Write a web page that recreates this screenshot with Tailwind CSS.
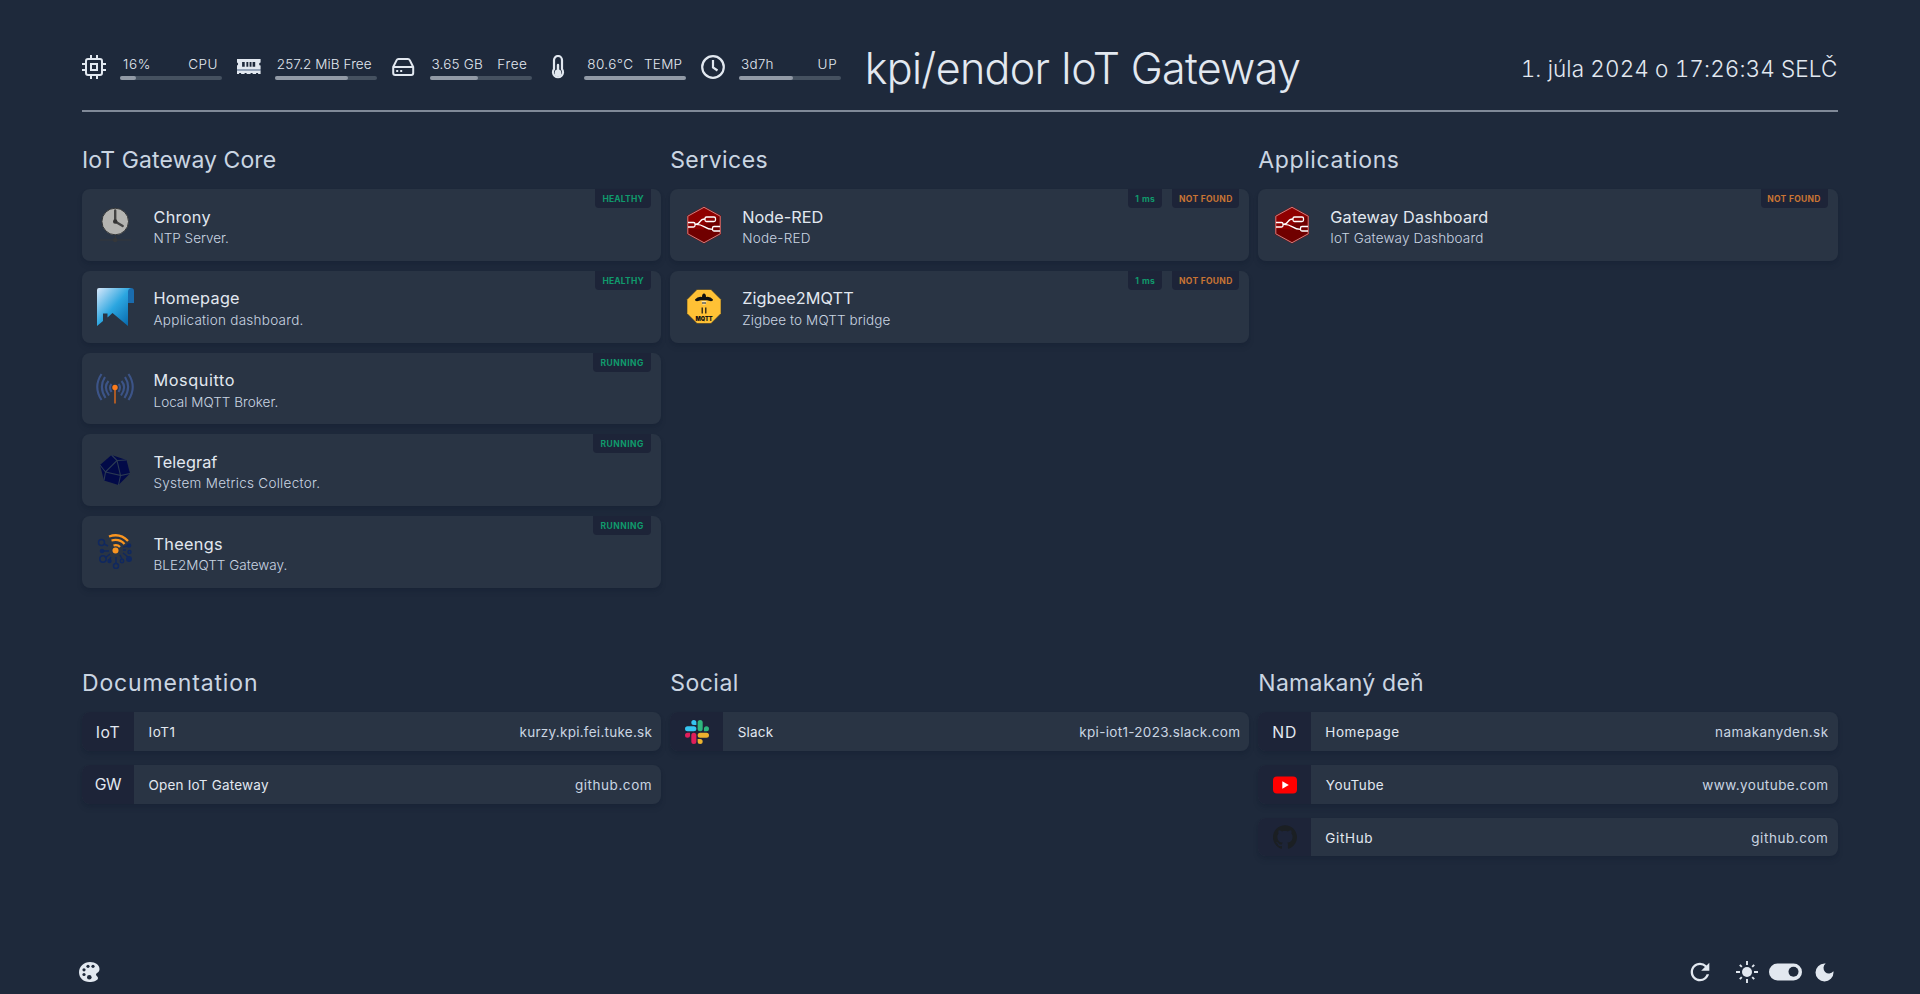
<!DOCTYPE html>
<html lang="sk">
<head>
<meta charset="utf-8">
<title>kpi/endor IoT Gateway</title>
<script src="https://cdn.jsdelivr.net/npm/@tailwindcss/browser@4"></script>
</head>
<body class="flex h-[994px] w-[1920px] flex-col overflow-hidden bg-[#1e293b] pr-[82.5px] pl-[82px] font-['Inter',sans-serif] whitespace-nowrap text-slate-200">

<svg class="hidden">
  <symbol id="nodered" viewBox="0 0 36 38">
    <path d="M18 .5 35 9.800v18.400L18 37.500 1 28.200V9.800z" fill="#8f0000"/>
    <path d="M18 19 34 10v18L18 37z" fill="#700000"/><path d="M2 23 34 24v4L18 37 2 28z" fill="#700000"/>
    <path d="M18 1.300 34.200 10.200v17.600L18 36.700 1.800 27.800V10.200z" fill="none" stroke="#c98080" stroke-width="1"/>
    <g fill="none" stroke="#fff" stroke-width="1.300"><path d="M2 16.500h5.500q1.500 0 1.500 1.500v1.500q0 1.500-1.500 1.500H2M9 18.300c7 0 3-5.300 10-5.300M10 18.300c9 0 8 5 16.500 5"/><rect x="19" y="11" width="10.500" height="4.500" rx="1.500"/><path d="M34 20.500h-6q-1.500 0-1.500 1.500v1.500q0 1.500 1.500 1.500h6"/></g>
  </symbol>
</svg>

<header class="flex h-[112px] shrink-0 items-start border-b-2 border-[#808998]">
  <div class="flex pt-[55px]">
    <div class="flex w-[154.75px] gap-[14px]">
      <svg class="size-6" viewBox="0 0 24 24" fill="none" stroke="currentColor" stroke-width="2" stroke-linecap="butt"><rect x="4" y="4" width="16" height="16" rx="2"/><rect x="9" y="9" width="6" height="6"/><path d="M9 0v4M15 0v4M9 20v4M15 20v4M20 9h4M20 15h4M0 9h4M0 15h4"/></svg>
      <div class="w-[102px]"><div class="flex h-[21px] justify-between pr-1 pl-[3px] text-[13.5px] leading-[18px] font-light"><span class="tracking-[0.7px]">16%</span><span class="tracking-[0.5px]">CPU</span></div><div class="h-1 rounded-full bg-[#455160]"><div class="h-1 rounded-full bg-[#929aa6]" style="width:16%"></div></div></div>
    </div>
    <div class="flex w-[154.75px] gap-[14px]">
      <svg class="size-6" viewBox="1 0 24 24"><path fill="currentColor" d="M0 4h24v3.500a1.500 1.500 0 0 0 0 3V14H0v-3.500a1.500 1.500 0 0 0 0-3zM0 15.800h24V19h-2.500v-1h-2v1h-3.500v-1h-2v1h-4v-1H8v1H4.500v-1h-2v1H0z" transform="translate(.6 0)"/><path fill="#94a3b8" d="M.6 14h24v2H.6z"/><path fill="#1e293b" d="M6.100 7h2.600v4.800H6.100zM10.400 7h1.900v4.800h-1.900zM13.600 7h1.900v4.800h-1.900zM16.600 7h2.600v4.800h-2.600z"/></svg>
      <div class="w-[102px]"><div class="flex h-[21px] justify-between pr-1 pl-[2px] text-[13.5px] leading-[18px] font-light"><span class="tracking-[0.09px]">257.2 MiB Free</span></div><div class="h-1 rounded-full bg-[#455160]"><div class="h-1 rounded-full bg-[#929aa6]" style="width:72%"></div></div></div>
    </div>
    <div class="flex w-[154.75px] gap-[14px]">
      <svg class="size-6" viewBox="0.8 0 24 24" fill="none" stroke="currentColor" stroke-width="2" stroke-linejoin="round"><path d="M22 12H2M5.450 5.110 2 12v6a2 2 0 0 0 2 2h16a2 2 0 0 0 2-2v-6l-3.450-6.890A2 2 0 0 0 16.760 4H7.240a2 2 0 0 0-1.790 1.110zM5 16h2M9 16h2"/></svg>
      <div class="w-[102px]"><div class="flex h-[21px] justify-between pr-1 pl-[2px] text-[13.5px] leading-[18px] font-light"><span class="tracking-[0.18px]">3.65 GB</span><span class="tracking-[0.6px]">Free</span></div><div class="h-1 rounded-full bg-[#455160]"><div class="h-1 rounded-full bg-[#929aa6]" style="width:48%"></div></div></div>
    </div>
    <div class="flex w-[154.75px] gap-[14px]">
      <svg class="size-6" viewBox="0 0 24 24" fill="none" stroke="currentColor"><path stroke-width="2.200" d="M8 5a4 4 0 0 1 8 0v9.200a5 5 0 1 1-8 0z"/><circle cx="12" cy="18" r="3.400" fill="currentColor" stroke="none"/><path stroke-width="2.400" stroke-linecap="round" d="M12 10V18"/></svg>
      <div class="w-[102px]"><div class="flex h-[21px] justify-between pr-1 pl-[3px] text-[13.5px] leading-[18px] font-light"><span class="tracking-[0.43px]">80.6°C</span><span class="tracking-[0.24px]">TEMP</span></div><div class="h-1 rounded-full bg-[#929aa6]"></div></div>
    </div>
    <div class="flex w-[154.75px] gap-[14px]">
      <svg class="size-6" viewBox="0 0 24 24" fill="none" stroke="currentColor" stroke-width="2.200"><circle cx="12" cy="12" r="10.800"/><path d="M12 5v7.500l4.500 3"/></svg>
      <div class="w-[102px]"><div class="flex h-[21px] justify-between pr-[3.5px] pl-[2px] text-[13.5px] leading-[18px] font-light"><span class="tracking-[0.21px]">3d7h</span><span class="tracking-[0.8px]">UP</span></div><div class="h-1 rounded-full bg-[#455160]"><div class="h-1 rounded-full bg-[#929aa6]" style="width:53%"></div></div></div>
    </div>
  </div>
  <h1 class="mt-[44px] ml-[9px] text-[43px] leading-[48px] font-[350] tracking-[-0.68px]">kpi/endor IoT Gateway</h1>
  <div class="mt-[53px] ml-auto text-[22.5px] leading-8 font-light tracking-[0.1px] tabular-nums">1. júla 2024 o 17:26:34 SELČ</div>
</header>

<main class="grid h-[554.5px] shrink-0 grid-cols-3 content-start items-start gap-x-[9px] pt-[31.5px]">
  <section>
    <h2 class="mb-[13.5px] text-[23px] leading-8 tracking-[0.08px] text-slate-300">IoT Gateway Core</h2>
    <div class="flex flex-col gap-[10px]">
      <div class="relative flex h-[71.75px] rounded-lg bg-[#293444] shadow-md shadow-slate-900/20">
        <svg class="mt-[17px] ml-[15px] size-9" viewBox="0 0 36 36"><path d="M3 34h31M18.500 30v4" stroke="#35373a" stroke-width="1.200"/><circle cx="18.200" cy="34" r="2.200" fill="#35373a"/><circle cx="18.200" cy="15.500" r="13.300" fill="#b4b4b1" stroke="#343638" stroke-width="1"/><path d="M18.200 4.500v11l7.500 4.500" fill="none" stroke="#444" stroke-width="2.400" stroke-linecap="round"/><circle cx="18.200" cy="15.500" r="2.200" fill="#333"/></svg>
        <div class="mt-[16.5px] ml-[20.5px]"><div class="text-[16.25px] leading-[22px] tracking-[0.3px]">Chrony</div><div class="mt-[1.5px] text-[13.5px] leading-[18px] font-light text-slate-300">NTP Server.</div></div>
        <div class="absolute top-0 right-[10px] flex h-[19px] text-[8.5px] leading-5 font-bold"><span class="w-14 rounded-b bg-[#1d2438] text-center tracking-[0.18px] text-[#109a6c]">HEALTHY</span></div>
      </div>
      <div class="relative flex h-[71.75px] rounded-lg bg-[#293444] shadow-md shadow-slate-900/20">
        <svg class="mt-[17px] ml-[15px] h-[38px] w-[37px]" viewBox="0 0 37 38"><defs><linearGradient id="hp" x1="0" y1="0" x2="1" y2="1"><stop offset="0" stop-color="#d8e8fb"/><stop offset=".5" stop-color="#2ba6e0"/><stop offset="1" stop-color="#0463a8"/></linearGradient></defs><path d="M31 0h3q3 0 3 3v12h-6z" fill="#1a6cae"/><path d="M2 0h32q-3 .5-3 4v34L15.500 25l-5 4.500v-4H6V33l-6 5V2q0-2 2-2z" fill="url(#hp)"/></svg>
        <div class="mt-[16.5px] ml-[19.500px]"><div class="text-[16.25px] leading-[22px] tracking-[0.27px]">Homepage</div><div class="mt-[1.5px] text-[13.5px] leading-[18px] font-light tracking-[0.26px] text-slate-300">Application dashboard.</div></div>
        <div class="absolute top-0 right-[10px] flex h-[19px] text-[8.5px] leading-5 font-bold"><span class="w-14 rounded-b bg-[#1d2438] text-center tracking-[0.18px] text-[#109a6c]">HEALTHY</span></div>
      </div>
      <div class="relative flex h-[71.75px] rounded-lg bg-[#293444] shadow-md shadow-slate-900/20">
        <svg class="mt-[17px] ml-[14px] h-9 w-[38px]" viewBox="0 0 38 36"><g fill="none" stroke="#3c5488" stroke-width="2.100"><path d="M5.500 4Q-3 17 5.500 30M9 7Q2.500 17 9.500 28M12.500 11Q7 17 13 25.500M15.500 14Q12.500 17 15.500 22M32.500 4Q41 17 32.500 30M29 7Q35.500 17 28.500 28M25.500 11Q31 17 25 25.500M22.500 14Q25.500 17 22.500 22"/></g><path d="M19 19v14.500" stroke="#b85f24" stroke-width="1.800"/><circle cx="19" cy="17.500" r="2.700" fill="#fd7b1c"/></svg>
        <div class="mt-[16.5px] ml-[19.500px]"><div class="text-[16.25px] leading-[22px] tracking-[0.58px]">Mosquitto</div><div class="mt-[1.5px] text-[13.5px] leading-[18px] font-light tracking-[0.02px] text-slate-300">Local MQTT Broker.</div></div>
        <div class="absolute top-0 right-[10px] flex h-[19px] text-[8.5px] leading-5 font-bold"><span class="w-[58px] rounded-b bg-[#1d2438] text-center tracking-[0.5px] text-[#109a6c]">RUNNING</span></div>
      </div>
      <div class="relative flex h-[71.75px] rounded-lg bg-[#293444] shadow-md shadow-slate-900/20">
        <svg class="mt-[18px] ml-[15px] size-9" viewBox="0 0 36 36"><path d="M14.500 3 29.500 8 33 21.500 21.500 33 7 28.500 3 13z" fill="#020a48"/><path d="M14.500 3 20 8.500 29.500 8M20 8.500 8.500 20 3 13M20 8.500l3.500 15 9.500-2M8.500 20l15 3.500-2 9.500M8.500 20 7 28.500" fill="none" stroke="#2c3b52" stroke-width="1.100"/></svg>
        <div class="mt-[16.5px] ml-[20.500px]"><div class="text-[16.25px] leading-[22px] tracking-[0.08px]">Telegraf</div><div class="mt-[1.5px] text-[13.5px] leading-[18px] font-light tracking-[0.27px] text-slate-300">System Metrics Collector.</div></div>
        <div class="absolute top-0 right-[10px] flex h-[19px] text-[8.5px] leading-5 font-bold"><span class="w-[58px] rounded-b bg-[#1d2438] text-center tracking-[0.5px] text-[#109a6c]">RUNNING</span></div>
      </div>
      <div class="relative flex h-[71.75px] rounded-lg bg-[#293444] shadow-md shadow-slate-900/20">
        <svg class="mt-[17px] ml-[15px] size-9" viewBox="0 0 36 36"><g fill="none" stroke="#10285f" stroke-width="1.500"><circle cx="4.500" cy="9.500" r="3"/><path d="M7 11l4 2M5 18h7M8 25l5-4M14 24l-2 4M19 24v6M23 22l2 4M26 20l5 4M26 17h3M26 14l5-1"/><circle cx="6" cy="26" r="3.200"/><circle cx="19" cy="33" r="2.500"/><circle cx="25" cy="28" r="1.700"/><circle cx="32.500" cy="19" r="1.500"/></g><g fill="#10285f"><circle cx="5" cy="18" r="2.300"/><circle cx="12.500" cy="28" r="2.200"/><circle cx="32" cy="26" r="3"/><circle cx="32" cy="12.500" r="2.300"/></g><circle cx="18.500" cy="17.500" r="3" fill="#fa9520"/><g fill="none" stroke="#fa9520" stroke-width="2.300"><path d="M16.500 12.500q4-1.200 6.500 1.500M14.500 7.500q8-2 13 3.500M12 3.500Q23-.5 31 8"/></g></svg>
        <div class="mt-[16.5px] ml-[20.500px]"><div class="text-[16.25px] leading-[22px] tracking-[0.3px]">Theengs</div><div class="mt-[1.5px] text-[13.5px] leading-[18px] font-light tracking-[0.02px] text-slate-300">BLE2MQTT Gateway.</div></div>
        <div class="absolute top-0 right-[10px] flex h-[19px] text-[8.5px] leading-5 font-bold"><span class="w-[58px] rounded-b bg-[#1d2438] text-center tracking-[0.5px] text-[#109a6c]">RUNNING</span></div>
      </div>
    </div>
  </section>

  <section>
    <h2 class="mb-[13.5px] text-[23px] leading-8 tracking-[0.45px] text-slate-300">Services</h2>
    <div class="flex flex-col gap-[10px]">
      <div class="relative flex h-[71.75px] rounded-lg bg-[#293444] shadow-md shadow-slate-900/20">
        <svg class="mt-[17px] ml-4 h-[38px] w-9"><use href="#nodered"/></svg>
        <div class="mt-[16.5px] ml-5"><div class="text-[16.25px] leading-[22px] tracking-[0.03px]">Node-RED</div><div class="mt-[1.5px] text-[13.5px] leading-[18px] font-light tracking-[0.24px] text-slate-300">Node-RED</div></div>
        <div class="absolute top-0 right-[10px] flex h-[19px] gap-[10px] text-[8.5px] leading-5 font-bold"><span class="w-[34px] rounded-b bg-[#1d2438] text-center tracking-[0.43px] text-[#109a6c]">1 ms</span><span class="w-[67px] rounded-b bg-[#1d2438] text-center tracking-[0.3px] text-[#c97434]">NOT FOUND</span></div>
      </div>
      <div class="relative flex h-[71.75px] rounded-lg bg-[#293444] shadow-md shadow-slate-900/20">
        <svg class="mt-[18px] ml-4 size-9" viewBox="0 0 36 36"><path d="M11 .5h14l10 10v14l-10 10H11l-10-10v-14z" fill="#ffc135" stroke="#3a3526" stroke-width=".6"/><path d="M9 10.500q3-3.500 7-2.500Q16 4.500 18 4.500t2 3.500q4-1 7 2.500.3 1.800-2 1.800l-4-1.100h-6l-4 1.100q-2.300 0-2-1.800z" fill="#111"/><path d="M15.500 12.300h5l-1 3.200h-3z" fill="#fff3c8"/><path d="M16 14h4M16.200 18.500v6M19.800 18.500v6" stroke="#111" stroke-width="1.200"/><text x="18" y="31.500" text-anchor="middle" textLength="17" lengthAdjust="spacingAndGlyphs" class="font-['Inter'] text-[6.5px] font-black" fill="#111">MQTT</text></svg>
        <div class="mt-[16.5px] ml-5"><div class="text-[16.25px] leading-[22px] tracking-[0.1px]">Zigbee2MQTT</div><div class="mt-[1.5px] text-[13.5px] leading-[18px] font-light tracking-[0.1px] text-slate-300">Zigbee to MQTT bridge</div></div>
        <div class="absolute top-0 right-[10px] flex h-[19px] gap-[10px] text-[8.5px] leading-5 font-bold"><span class="w-[34px] rounded-b bg-[#1d2438] text-center tracking-[0.43px] text-[#109a6c]">1 ms</span><span class="w-[67px] rounded-b bg-[#1d2438] text-center tracking-[0.3px] text-[#c97434]">NOT FOUND</span></div>
      </div>
    </div>
  </section>

  <section>
    <h2 class="mb-[13.5px] text-[23px] leading-8 tracking-[0.6px] text-slate-300">Applications</h2>
    <div class="relative flex h-[71.75px] rounded-lg bg-[#293444] shadow-md shadow-slate-900/20">
      <svg class="mt-[17px] ml-4 h-[38px] w-9"><use href="#nodered"/></svg>
      <div class="mt-[16.5px] ml-5"><div class="text-[16.25px] leading-[22px] tracking-[0.16px]">Gateway Dashboard</div><div class="mt-[1.5px] text-[13.5px] leading-[18px] font-light tracking-[0.16px] text-slate-300">IoT Gateway Dashboard</div></div>
      <div class="absolute top-0 right-[10px] flex h-[19px] text-[8.5px] leading-5 font-bold"><span class="w-[67px] rounded-b bg-[#1d2438] text-center tracking-[0.3px] text-[#c97434]">NOT FOUND</span></div>
    </div>
  </section>
</main>

<div class="grid shrink-0 grid-cols-3 items-start gap-x-[9px]">
  <section>
    <h2 class="mb-[13.5px] text-[23px] leading-8 tracking-[0.85px] text-slate-300">Documentation</h2>
    <div class="flex flex-col gap-[14.2px]">
      <div class="flex h-[38.7px] items-center overflow-hidden rounded-lg bg-[#293444] text-[13.5px] shadow-md shadow-slate-900/20"><div class="flex h-full w-[52px] items-center justify-center bg-[#1d2438] pt-[2px] text-[15.75px] tracking-[0.7px]">IoT</div><div class="flex grow justify-between pt-[2px] pr-[9px] pl-[14.500px]"><span class="tracking-[0.54px]">IoT1</span><span class="tracking-[0.26px] text-slate-300">kurzy.kpi.fei.tuke.sk</span></div></div>
      <div class="flex h-[38.7px] items-center overflow-hidden rounded-lg bg-[#293444] text-[13.5px] shadow-md shadow-slate-900/20"><div class="flex h-full w-[52px] items-center justify-center bg-[#1d2438] pt-[2px] text-[15.75px] tracking-[-0.5px]">GW</div><div class="flex grow justify-between pt-[2px] pr-[9px] pl-[14.500px]"><span class="tracking-[0.2px]">Open IoT Gateway</span><span class="tracking-[0.55px] text-slate-300">github.com</span></div></div>
    </div>
  </section>
  <section>
    <h2 class="mb-[13.5px] text-[23px] leading-8 tracking-[0.5px] text-slate-300">Social</h2>
    <div class="flex h-[38.7px] items-center overflow-hidden rounded-lg bg-[#293444] text-[13.5px] shadow-md shadow-slate-900/20"><div class="flex h-full w-[53px] items-center justify-center bg-[#1d2438] pt-px"><svg class="size-6" viewBox="0 0 24 24"><path fill="#e01e5a" d="M5.042 15.165a2.528 2.528 0 0 1-2.520 2.523A2.528 2.528 0 0 1 0 15.165a2.527 2.527 0 0 1 2.522-2.520h2.520v2.520zM6.313 15.165a2.527 2.527 0 0 1 2.521-2.520 2.527 2.527 0 0 1 2.521 2.520v6.313A2.528 2.528 0 0 1 8.834 24a2.528 2.528 0 0 1-2.521-2.522v-6.313z"/><path fill="#36c5f0" d="M8.834 5.042a2.528 2.528 0 0 1-2.521-2.520A2.528 2.528 0 0 1 8.834 0a2.528 2.528 0 0 1 2.521 2.522v2.520H8.834zM8.834 6.313a2.528 2.528 0 0 1 2.521 2.521 2.528 2.528 0 0 1-2.521 2.521H2.522A2.528 2.528 0 0 1 0 8.834a2.528 2.528 0 0 1 2.522-2.521h6.312z"/><path fill="#2eb67d" d="M18.956 8.834a2.528 2.528 0 0 1 2.522-2.521A2.528 2.528 0 0 1 24 8.834a2.528 2.528 0 0 1-2.522 2.521h-2.522V8.834zM17.688 8.834a2.528 2.528 0 0 1-2.523 2.521 2.527 2.527 0 0 1-2.520-2.521V2.522A2.527 2.527 0 0 1 15.165 0a2.528 2.528 0 0 1 2.523 2.522v6.312z"/><path fill="#ecb22e" d="M15.165 18.956a2.528 2.528 0 0 1 2.523 2.522A2.528 2.528 0 0 1 15.165 24a2.527 2.527 0 0 1-2.520-2.522v-2.522h2.520zM15.165 17.688a2.527 2.527 0 0 1-2.520-2.523 2.526 2.526 0 0 1 2.520-2.520h6.313A2.527 2.527 0 0 1 24 15.165a2.528 2.528 0 0 1-2.522 2.523h-6.313z"/></svg></div><div class="flex grow justify-between pt-[2px] pr-[9px] pl-[14.500px]"><span class="tracking-[0.19px]">Slack</span><span class="tracking-[0.32px] text-slate-300">kpi-iot1-2023.slack.com</span></div></div>
  </section>
  <section>
    <h2 class="mb-[13.5px] text-[23px] leading-8 tracking-[0.25px] text-slate-300">Namakaný deň</h2>
    <div class="flex flex-col gap-[14.2px]">
      <div class="flex h-[38.7px] items-center overflow-hidden rounded-lg bg-[#293444] text-[13.5px] shadow-md shadow-slate-900/20"><div class="flex h-full w-[53px] items-center justify-center bg-[#1d2438] pt-[2px] text-[15.75px] tracking-[0.9px]">ND</div><div class="flex grow justify-between pt-[2px] pr-[9px] pl-[14px]"><span class="tracking-[0.56px]">Homepage</span><span class="tracking-[0.42px] text-slate-300">namakanyden.sk</span></div></div>
      <div class="flex h-[38.7px] items-center overflow-hidden rounded-lg bg-[#293444] text-[13.5px] shadow-md shadow-slate-900/20"><div class="flex h-full w-[53px] items-center justify-center bg-[#1d2438] pt-px"><svg class="size-6" viewBox="0 0 24 24"><rect y="3.500" width="24" height="17" rx="4" fill="#f00"/><path d="M9.300 8.300v7.400l6.500-3.700z" fill="#fff"/></svg></div><div class="flex grow justify-between pt-[2px] pr-[9px] pl-[14.500px]"><span class="tracking-[0.42px]">YouTube</span><span class="tracking-[0.45px] text-slate-300">www.youtube.com</span></div></div>
      <div class="flex h-[38.7px] items-center overflow-hidden rounded-lg bg-[#293444] text-[13.5px] shadow-md shadow-slate-900/20"><div class="flex h-full w-[53px] items-center justify-center bg-[#1d2438]"><svg class="size-6" viewBox="0 0 24 24"><path fill="#1b1f23" d="M12 .297c-6.630 0-12 5.373-12 12 0 5.303 3.438 9.800 8.205 11.385.6.113.820-.258.820-.577 0-.285-.010-1.040-.015-2.040-3.338.724-4.042-1.610-4.042-1.610C4.422 18.070 3.633 17.700 3.633 17.700c-1.087-.744.084-.729.084-.729 1.205.084 1.838 1.236 1.838 1.236 1.070 1.835 2.809 1.305 3.495.998.108-.776.417-1.305.760-1.605-2.665-.3-5.466-1.332-5.466-5.930 0-1.310.465-2.380 1.235-3.220-.135-.303-.540-1.523.105-3.176 0 0 1.005-.322 3.300 1.230.960-.267 1.980-.399 3-.405 1.020.006 2.040.138 3 .405 2.280-1.552 3.285-1.230 3.285-1.230.645 1.653.240 2.873.120 3.176.765.840 1.230 1.910 1.230 3.220 0 4.610-2.805 5.625-5.475 5.920.420.360.810 1.096.810 2.220 0 1.606-.015 2.896-.015 3.286 0 .315.210.690.825.570C20.565 22.092 24 17.592 24 12.297c0-6.627-5.373-12-12-12"/></svg></div><div class="flex grow justify-between pt-[2px] pr-[9px] pl-[14px]"><span class="tracking-[0.65px]">GitHub</span><span class="tracking-[0.55px] text-slate-300">github.com</span></div></div>
    </div>
  </section>
</div>

<footer class="mt-auto flex h-[33px] shrink-0 items-start justify-between pr-[4px]">
  <svg class="mt-px -ml-[3px] h-5 w-[21px]" viewBox="0 0 21 20"><path fill="currentColor" d="M11 0C5 0 0 4.500 0 10.300 0 16 4.500 20 10.500 20c4 0 8.500-1.500 8.500-4 0-1.800-2-2-2-3.500 0-1.700 3.500-1.600 3.500-5.500C20.500 3 16.500 0 11 0z"/><g fill="#1e293b"><circle cx="9" cy="4.300" r="1.600"/><circle cx="14" cy="4.300" r="1.600"/><circle cx="5" cy="7.800" r="1.600"/><circle cx="5" cy="12.500" r="1.600"/><circle cx="10.300" cy="15.300" r="2.300"/></g></svg>
  <div class="-mt-[3px] flex items-center">
    <svg class="mr-[22px] size-[28px]" viewBox="0 0 24 24"><path fill="currentColor" d="M17.650 6.350A7.958 7.958 0 0 0 12 4c-4.420 0-7.990 3.580-7.990 8s3.570 8 7.990 8c3.730 0 6.840-2.550 7.730-6h-2.080A5.990 5.990 0 0 1 12 18c-3.310 0-6-2.690-6-6s2.690-6 6-6c1.660 0 3.140.690 4.220 1.780L13 11h7V4l-2.350 2.350z"/></svg>
    <svg class="mr-[11px] size-[22px]" viewBox="0 0 22 22"><circle cx="11" cy="11" r="5" fill="currentColor"/><path d="M11 0v4M11 18v4M0 11h4M18 11h4M3.800 3.800l2 2M16.200 16.200l2 2M3.800 18.200l2-2M16.200 5.800l2-2" stroke="currentColor" stroke-width="1.900"/></svg>
    <svg class="mr-[13px] h-[18px] w-[33px]" viewBox="0 0 33 18"><rect y=".5" width="33" height="17" rx="8.500" fill="currentColor"/><circle cx="24.500" cy="8.800" r="5" fill="#1e293b"/></svg>
    <svg class="size-[19px]" viewBox="0 0 19 19"><path fill="currentColor" d="M9.500.5a9 9 0 1 0 9 9q0-.6-.1-1.200A5.500 5.500 0 1 1 10.700.6Q10.100.5 9.500.5z"/></svg>
  </div>
</footer>
</body>
</html>
